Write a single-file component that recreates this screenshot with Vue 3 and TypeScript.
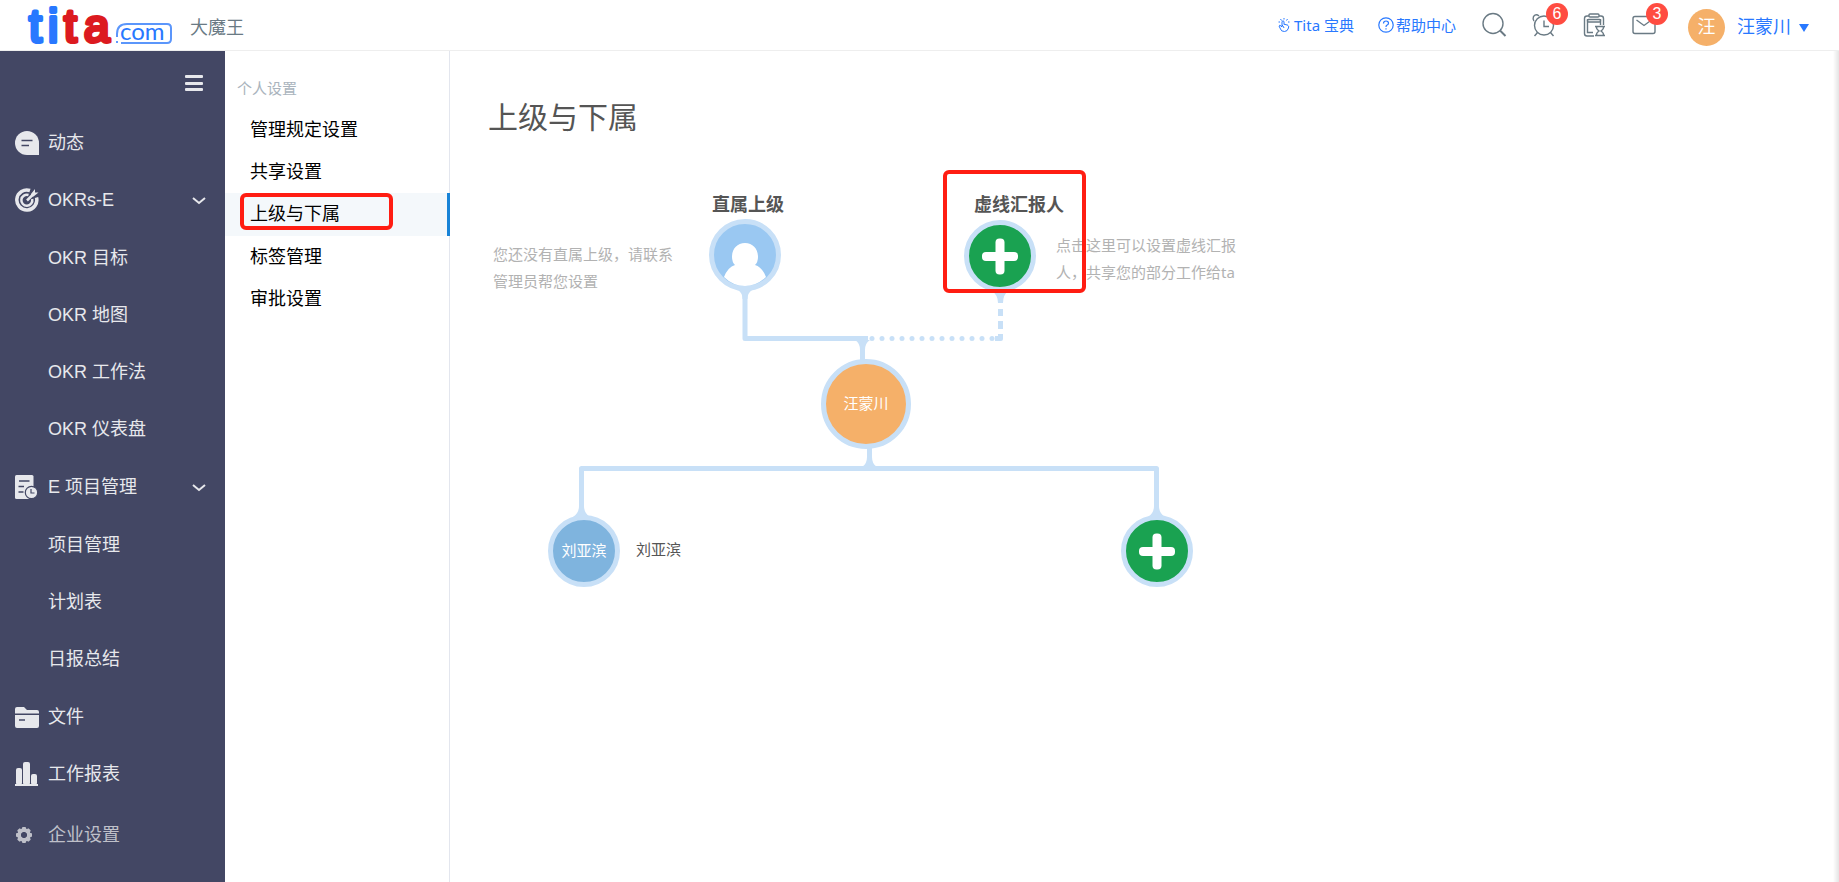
<script setup lang="ts">
import { ref } from 'vue'

interface NavItem {
  label: string
  icon?: 'feed' | 'target' | 'project' | 'folder' | 'chart'
  children?: string[]
}

const navItems: NavItem[] = [
  { label: '动态', icon: 'feed' },
  { label: 'OKRs-E', icon: 'target', children: ['OKR 目标', 'OKR 地图', 'OKR 工作法', 'OKR 仪表盘'] },
  { label: 'E 项目管理', icon: 'project', children: ['项目管理', '计划表', '日报总结'] },
  { label: '文件', icon: 'folder' },
  { label: '工作报表', icon: 'chart' },
]

const settings: string[] = ['管理规定设置', '共享设置', '上级与下属', '标签管理', '审批设置']
const current = ref('上级与下属')
const dots: number[] = Array.from({ length: 12 }, (_, i) => 384 + i * 10)
const teeth: number[] = [0, 45, 90, 135, 180, 225, 270, 315]
</script>

<template>
  <div class="page">
    <header class="topbar">
      <a class="logo" href="#" aria-label="tita.com">
        <svg width="150" height="56" viewBox="0 0 150 56">
          <g class="logo-main">
            <text class="blue" x="7" y="42">t</text>
            <text class="blue" x="26" y="42">i</text>
            <text class="red" x="42" y="42">t</text>
            <text class="red" x="62" y="42">a</text>
          </g>
          <path d="M95 37V34Q95 24 105 24H145Q149 24 149 28V39Q149 43 145 43H99" fill="none" stroke="#5b96fb" stroke-width="2" />
          <circle cx="95" cy="42" r="1" fill="#2878ff" />
          <text class="logo-com" x="98" y="40">com</text>
        </svg>
      </a>
      <span class="company">大魔王</span>

      <div class="tools">
        <a class="link" href="#">
          <svg width="14" height="16" viewBox="0 0 14 16" fill="none" stroke="currentColor" stroke-width="1">
            <path d="M5 8V4.500Q6 3 7 4.500V7.500Q8 6.500 9 8Q10 7 11 8.500Q12 8.500 11.500 11Q10.500 14.500 7.500 14.500Q4 14.500 3.500 12L2 9Q2.500 7.500 4 9L5 10V8Q6.500 9 7 11M7 1V2.500M3.500 2L4.500 3.500M10.500 2L9.500 3.500M1.500 5H3M11 5H12.500" />
          </svg>
          <span>Tita 宝典</span>
        </a>
        <a class="link help" href="#">
          <svg width="16" height="16" viewBox="0 0 16 16" fill="none" stroke="currentColor" stroke-width="1.200">
            <circle cx="8" cy="8" r="7.200" />
            <path d="M5.500 6.500Q5.500 4 8 4T10.500 6.200Q10.500 7.500 8.800 8.300Q8 8.700 8 10M8 11.200V12.500" />
          </svg>
          <span>帮助中心</span>
        </a>
        <button class="tool" type="button" aria-label="搜索">
          <svg width="26" height="26" viewBox="0 0 26 26"><circle cx="12" cy="11.500" r="10" /><path d="M19 18.500L24.500 24" stroke-width="2" /></svg>
        </button>
        <button class="tool" type="button" aria-label="提醒">
          <svg width="26" height="26" viewBox="0 0 26 26">
            <circle cx="13" cy="13.500" r="9.500" /><path d="M13 8.500V14.500H18M6.500 20.500L3.500 24M19.500 20.500L22.500 24" />
            <path d="M3 9Q1.500 7 2.500 4.500Q5 1.500 8 4M23 9Q24.500 7 23.500 4.500Q21 1.500 18 4" />
          </svg>
          <span class="badge">6</span>
        </button>
        <button class="tool" type="button" aria-label="任务">
          <svg width="26" height="26" viewBox="0 0 26 26">
            <path d="M8 4H6Q3.500 4 3.500 6.500V21.500Q3.500 24 6 24H13M18 4H20Q22.500 4 22.500 6.500V13" />
            <path d="M6.500 7V20.500H12M19.500 7V13" />
            <rect x="8" y="2" width="10" height="3" rx="1" /><rect x="6.500" y="7.500" width="13" height="2.500" rx="1" />
            <path d="M14 14.500H24M14 23.500H24M15.500 14.500Q15 17 18 19Q15 21 15.500 23.500M22.500 14.500Q23 17 20 19Q23 21 22.500 23.500" />
          </svg>
        </button>
        <button class="tool" type="button" aria-label="消息">
          <svg width="26" height="26" viewBox="0 0 26 26"><rect x="2" y="4.500" width="22" height="17" rx="2" /><path d="M5.500 8L13 13.500L20.500 8" /></svg>
          <span class="badge">3</span>
        </button>
        <button class="account" type="button">
          <span class="avatar">汪</span>
          <span class="username">汪蒙川</span>
          <svg class="caret" width="10" height="8" viewBox="0 0 10 8"><path d="M0 0H10L5 8Z" fill="currentColor" /></svg>
        </button>
      </div>
    </header>

    <div class="body">
      <nav class="sidebar" aria-label="主导航">
        <div class="side-head">
          <button class="burger" type="button" aria-label="收起菜单"><i></i><i></i><i></i></button>
        </div>
        <div v-for="item in navItems" :key="item.label">
          <a class="nav-item" href="#">
            <svg v-if="item.icon === 'feed'" class="nav-icon" viewBox="0 0 24 24">
              <path d="M12 0A12 12 0 0 1 24 12V24H12A12 12 0 0 1 12 0Z" fill="currentColor" /><path d="M6.500 9.500H17.500M6.500 14.500H14" stroke="#434764" stroke-width="1.500" />
            </svg>
            <svg v-else-if="item.icon === 'target'" class="nav-icon" viewBox="0 0 24 24" fill="none" stroke="currentColor">
              <path d="M15 2.500A10 10 0 1 0 21.500 9.500" stroke-width="3.500" /><path d="M13.500 7A5.500 5.500 0 1 0 17.200 11" stroke-width="2.500" />
              <path d="M12 12.500L19 5.500" stroke-width="2.500" /><path d="M16 6L20 1V4.500H23.500L18.500 8.500H16Z" fill="currentColor" stroke="none" />
            </svg>
            <svg v-else-if="item.icon === 'project'" class="nav-icon" viewBox="0 0 24 24">
              <rect x="0" y="0" width="18.500" height="24" rx="1.500" fill="currentColor" />
              <path d="M4 6H14.500M3.500 11.500H9M3.500 17H8.500" stroke="#434764" stroke-width="1.500" />
              <circle cx="16.500" cy="17.500" r="6.200" fill="currentColor" stroke="#434764" stroke-width="1.200" /><path d="M16 14V18H19.500" fill="none" stroke="#434764" stroke-width="1.200" />
            </svg>
            <svg v-else-if="item.icon === 'folder'" class="nav-icon" viewBox="0 0 24 24">
              <path d="M0 8.500V4Q0 2 2 2H9L12 5H22Q24 5 24 7V8.500ZM0 10H24V21Q24 23 22 23H2Q0 23 0 21Z" fill="currentColor" /><path d="M4 15H10" stroke="#434764" stroke-width="1.500" />
            </svg>
            <svg v-else class="nav-icon" viewBox="0 0 24 24" fill="currentColor">
              <rect x="1" y="6" width="6" height="17" rx="2" /><rect x="8" y="0" width="7" height="23" rx="2" /><rect x="16" y="12" width="6" height="11" rx="2" /><rect y="22" width="23" height="2" />
            </svg>
            <span>{{ item.label }}</span>
            <svg v-if="item.children" class="chevron" width="14" height="10" viewBox="0 0 14 10"><path d="M1 3L7 8L13 3" fill="none" stroke="currentColor" stroke-width="2" /></svg>
          </a>
          <div v-if="item.children" class="subnav">
            <a v-for="child in item.children" :key="child" class="nav-item child" href="#">{{ child }}</a>
          </div>
        </div>
        <a class="nav-item company-settings" href="#">
          <svg class="nav-icon" viewBox="0 0 24 24">
            <g fill="currentColor"><rect v-for="t in teeth" :key="t" x="7" y="4" width="4" height="5" rx="1" :transform="`rotate(${t} 9 12)`" /></g>
            <circle cx="9" cy="12" r="5" fill="none" stroke="currentColor" stroke-width="3.500" />
          </svg>
          <span>企业设置</span>
        </a>
      </nav>

      <nav class="settings" aria-label="个人设置">
        <h2>个人设置</h2>
        <a v-for="s in settings" :key="s" href="#" :class="{ active: s === current }" @click.prevent="current = s">
          {{ s }}<span v-if="s === '上级与下属'" class="mark mark-menu"></span>
        </a>
      </nav>

      <main class="content">
        <h1>上级与下属</h1>
        <div class="chart">
          <svg class="wires" width="720" height="440" viewBox="0 0 720 440" fill="none" stroke="#c8e0f7" stroke-width="5">
            <path d="M257 129V178.500H380M374.500 178V202M381.500 286V308M93.500 357V308.500H668.500V357" stroke-linejoin="round" />
            <g fill="#c8e0f7" stroke="none">
              <path d="M250 130H264Q259.500 133 259.500 139H254.500Q254.500 133 250 130Z" />
              <path d="M367 180H382Q377 183 377 190H372Q372 183 367 180Z" />
              <path d="M374 307H389Q384 304 384 297H379Q379 304 374 307Z" />
              <path d="M85 357H102Q96 353 96 346H91Q91 353 85 357Z" />
              <path d="M660 357H677Q671 353 671 346H666Q666 353 660 357Z" />
              <path d="M504 131H520Q515 135 515 143H510Q510 135 504 131Z" />
              <rect x="510" y="149" width="5" height="7" /><rect x="510" y="161" width="5" height="8" />
              <path d="M510 174H515V179Q515 181 513 181H507V176H510Z" />
              <circle v-for="x in dots" :key="x" :cx="x" cy="178.500" r="2.500" />
              <circle cx="504" cy="178.500" r="2.500" />
            </g>
          </svg>

          <strong class="role role-direct">直属上级</strong>
          <p class="hint hint-direct">您还没有直属上级，请联系管理员帮您设置</p>
          <div class="node direct">
            <svg width="62" height="62" viewBox="0 0 62 62"><path d="M31 19C39 19 44 25 44 33Q44 38 41 41Q48 43 52 53Q43 62 31 62T10 53Q14 43 21 41Q18 38 18 33C18 25 23 19 31 19Z" fill="#fff" /></svg>
          </div>

          <strong class="role role-dotted">虚线汇报人</strong>
          <p class="hint hint-dotted">点击这里可以设置虚线汇报人，共享您的部分工作给ta</p>
          <button class="node add dotted" type="button" aria-label="添加虚线汇报人"></button>

          <div class="node me">汪蒙川</div>
          <div class="node report">刘亚滨</div>
          <span class="report-name">刘亚滨</span>
          <button class="node add new-report" type="button" aria-label="添加下属"></button>
          <span class="mark mark-dotted"></span>
        </div>
      </main>
      <div class="drawer-edge"></div>
    </div>
  </div>
</template>

<style>
body {
  margin: 0;
}
</style>

<style scoped>
.page {
  min-height: 100vh;
  display: flex;
  flex-direction: column;
  background: #fff;
  font-family: "Liberation Sans", "Noto Sans CJK SC", sans-serif;
  font-size: 18px;
  line-height: 24px;
  color: #000;
}
a {
  color: inherit;
  text-decoration: none;
}
button {
  padding: 0;
  border: 0;
  background: none;
  font: inherit;
  color: inherit;
  cursor: pointer;
}
svg {
  display: block;
  flex: none;
}
.topbar {
  display: flex;
  align-items: center;
  height: 50px;
  padding: 0 30px 0 22px;
  border-bottom: 1px solid #eeeeee;
}
.logo {
  align-self: flex-start;
}
.logo-main text {
  font-family: "Liberation Sans", sans-serif;
  font-size: 46px;
  stroke-width: 4px;
  stroke-linejoin: round;
}
.logo .blue {
  fill: #2878ff;
  stroke: #2878ff;
}
.logo .red {
  fill: #dc1a20;
  stroke: #dc1a20;
}
.logo-com {
  font-family: Lato, sans-serif;
  font-size: 24px;
  fill: #2878ff;
}
.company {
  margin-left: 18px;
  padding-top: 6px;
  color: #6a7a84;
}
.tools {
  display: flex;
  align-items: center;
  gap: 24px;
  margin-left: auto;
}
.link {
  display: flex;
  align-items: center;
  gap: 3px;
  font-family: "Noto Sans", "Noto Sans CJK SC", sans-serif;
  font-size: 15px;
  line-height: 20px;
  color: #2878ff;
}
.help {
  gap: 2px;
  margin-right: 1px;
}
.tool {
  position: relative;
}
.tool svg {
  fill: none;
  stroke: #6a7a84;
  stroke-width: 1.4;
}
.badge {
  position: absolute;
  top: -9px;
  left: 15px;
  width: 22px;
  height: 22px;
  border-radius: 50%;
  background: #ff4c41;
  color: #fff;
  font-size: 16px;
  line-height: 22px;
  text-align: center;
}
.account {
  display: flex;
  align-items: center;
  margin-left: 7px;
  padding-top: 4px;
  color: #2878ff;
}
.avatar {
  width: 37px;
  height: 37px;
  margin-right: 12px;
  border-radius: 50%;
  background: #f5b069;
  color: #fff;
  line-height: 37px;
  text-align: center;
}
.username {
  margin-right: 8px;
}
.caret {
  margin-top: 2px;
}
.body {
  position: relative;
  display: flex;
  flex: 1;
}
.sidebar {
  flex: none;
  width: 225px;
  background: #434764;
  color: #e7e8ec;
}
.side-head {
  display: flex;
  justify-content: flex-end;
  padding: 24px 22px 23px 0;
}
.burger {
  display: flex;
  flex-direction: column;
  justify-content: space-between;
  width: 18px;
  height: 16px;
}
.burger i {
  height: 3px;
  border-radius: 1px;
  background: #e7e8ec;
}
.nav-item {
  display: flex;
  align-items: center;
  height: 57px;
  padding: 0 19px 0 15px;
}
.nav-icon {
  width: 24px;
  height: 24px;
  margin-right: 9px;
}
.chevron {
  margin-left: auto;
}
.subnav {
  padding: 1px 0;
}
.child {
  padding-left: 48px;
}
.company-settings {
  margin-top: 4px;
  color: #bfc0c9;
}
.settings {
  box-sizing: border-box;
  flex: none;
  width: 225px;
  padding-top: 26px;
  border-right: 1px solid #e3e6ee;
}
.settings h2 {
  margin: 0 0 8px;
  padding-left: 12px;
  font-size: 15px;
  line-height: 24px;
  font-weight: 400;
  color: #aab4bd;
}
.settings a {
  position: relative;
  display: block;
  padding-left: 25px;
  line-height: 42px;
}
.settings .active {
  margin-right: -1px;
  border-right: 3px solid #1883d7;
  background: #f4f8fb;
  line-height: 43px;
}
.mark {
  position: absolute;
  box-sizing: border-box;
  border: 4px solid #ff1d12;
  border-radius: 6px;
  pointer-events: none;
}
.mark-menu {
  top: 0;
  left: 15px;
  width: 153px;
  height: 37px;
}
.content {
  flex: 1;
  min-width: 0;
  padding: 47px 0 0 38px;
}
h1 {
  margin: 0 0 22px;
  font-size: 30px;
  line-height: 40px;
  font-weight: 400;
  color: #555;
}
.chart {
  position: relative;
  height: 440px;
  font-family: "Noto Sans", "Noto Sans CJK SC", sans-serif;
  font-size: 15px;
  line-height: 20px;
  color: #555;
}
.wires,
.role,
.hint,
.node,
.report-name {
  position: absolute;
}
.wires {
  top: 0;
  left: 0;
}
.role {
  top: 32px;
  font-size: 18px;
  line-height: 24px;
}
.role-direct {
  left: 224px;
}
.role-dotted {
  left: 486px;
}
.hint {
  width: 184px;
  margin: 0;
  line-height: 27px;
  color: #b2b2b2;
}
.hint-direct {
  top: 81px;
  left: 5px;
}
.hint-dotted {
  top: 72px;
  left: 568px;
}
.node {
  box-sizing: border-box;
  display: flex;
  align-items: center;
  justify-content: center;
  width: 72px;
  height: 72px;
  border: 5px solid #c8e0f7;
  border-radius: 50%;
  color: #fff;
}
.direct {
  top: 59px;
  left: 221px;
  background: #9ac8f2;
}
.dotted {
  top: 60px;
  left: 476px;
}
.me {
  top: 199px;
  left: 333px;
  width: 90px;
  height: 90px;
  padding-bottom: 2px;
  background: #f5b069;
}
.report {
  top: 355px;
  left: 60px;
  padding-bottom: 2px;
  background: #7fb4de;
}
.report-name {
  top: 379px;
  left: 148px;
}
.new-report {
  top: 355px;
  left: 633px;
}
.add {
  background: #1aa251;
}
.add::before,
.add::after {
  content: "";
  position: absolute;
  width: 36px;
  height: 9px;
  border-radius: 4px;
  background: #fff;
}
.add::after {
  transform: rotate(90deg);
}
.mark-dotted {
  top: 10px;
  left: 455px;
  width: 143px;
  height: 123px;
}
.drawer-edge {
  position: absolute;
  top: 0;
  right: 0;
  bottom: 0;
  width: 6px;
  background: linear-gradient(to right, #fff, #e4e4e4);
}
</style>
